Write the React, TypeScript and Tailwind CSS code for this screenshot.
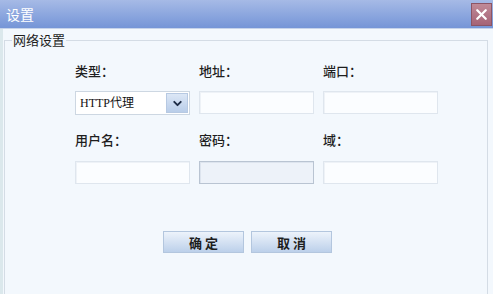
import { ChevronDown, X } from "lucide-react";

const FONT = { fontFamily: '"Noto Sans CJK SC", "Liberation Sans", sans-serif' };

function Label({ children }: { children: string }) {
  return <div className="h-[16px] text-[13px] leading-[16px] font-medium text-[#1e1e1e]">{children}</div>;
}

function TextBox({ muted = false }: { muted?: boolean }) {
  return (
    <div
      className={
        muted
          ? "h-[23px] w-[115px] border border-[#b9c4d2] bg-[#edf2f9] shadow-[inset_1px_1px_0_#dde4ee]"
          : "h-[23px] w-[115px] border border-[#dfe6ee] bg-[#fbfdff] shadow-[inset_1px_1px_0_#eef2f7]"
      }
    />
  );
}

export default function App() {
  return (
    <div className="flex h-[294px] w-[493px] flex-col overflow-hidden bg-[#f3f8fd]" style={FONT}>
      {/* title bar */}
      <div className="flex h-[29px] shrink-0 items-center justify-between border-b border-[#c6d3ea] bg-gradient-to-b from-[#a6bae6] to-[#7595d7] pl-[6px] pr-[1px]">
        <span className="text-[14px] leading-none text-white">设置</span>
        <div className="flex h-[23px] w-[21px] items-center justify-center border border-[#8c5565] bg-gradient-to-b from-[#c08a97] to-[#a56377]">
          <X className="h-[17px] w-[17px] text-white" strokeWidth={3.2} />
        </div>
      </div>

      <div className="flex flex-1 border-l-[3px] border-[#dbe8ec] pl-[1px] pt-[4px] pr-[4px]">
        <fieldset className="h-[300px] w-[484px] border border-[#d4dce5] pl-[70px]">
          <legend className="-ml-[63px] px-[1px] text-[13px] leading-[14px] text-[#1e1e1e]">网络设置</legend>

          <div className="grid grid-cols-[115px_115px_115px] gap-x-[9px] pt-[16px]">
            <Label>类型：</Label>
            <Label>地址：</Label>
            <Label>端口：</Label>

            <div className="mt-[12px] flex h-[24px] items-center border border-[#cdd7e2] bg-white">
              <span
                className="flex-1 pl-[4px] text-[12px] leading-none text-[#111]"
                style={{ fontFamily: '"Liberation Serif", "Noto Sans CJK SC", serif' }}
              >
                HTTP代理
              </span>
              <div className="mr-[1px] flex h-[20px] w-[22px] items-center justify-center border border-[#b7c9e2] bg-gradient-to-b from-[#dce7f6] to-[#b9cde9]">
                <ChevronDown className="h-[13px] w-[13px] text-[#1d2b45]" strokeWidth={3.5} />
              </div>
            </div>
            <div className="mt-[12px]">
              <TextBox />
            </div>
            <div className="mt-[12px]">
              <TextBox />
            </div>

            <div className="mt-[17px]">
              <Label>用户名：</Label>
            </div>
            <div className="mt-[17px]">
              <Label>密码：</Label>
            </div>
            <div className="mt-[17px]">
              <Label>域：</Label>
            </div>

            <div className="mt-[13px]">
              <TextBox />
            </div>
            <div className="mt-[13px]">
              <TextBox muted />
            </div>
            <div className="mt-[13px]">
              <TextBox />
            </div>
          </div>

          <div className="ml-[88px] mt-[47px] flex gap-[7px]">
            {["确 定", "取 消"].map((t) => (
              <button
                key={t}
                className="h-[22px] w-[81px] border border-[#b3c6de] bg-gradient-to-b from-[#edf3fb] to-[#bcd0ea] text-[13px] leading-none font-bold text-[#1e1e1e]"
              >
                {t}
              </button>
            ))}
          </div>
        </fieldset>
      </div>
    </div>
  );
}
